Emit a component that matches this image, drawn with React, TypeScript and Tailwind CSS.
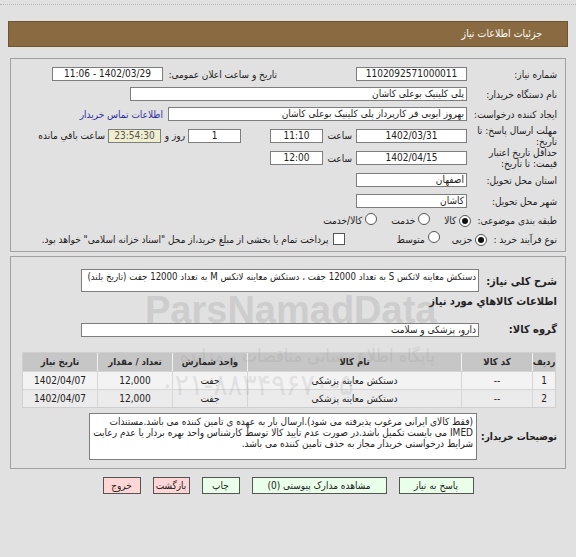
import React from 'react'

function Box({ className, children }: { className: string; children?: React.ReactNode }) {
  return (
    <div className={`h-[14px] border border-[#7d7d7d] bg-white leading-[12px] whitespace-nowrap overflow-hidden ${className}`}>
      {children}
    </div>
  )
}

function Radio({ checked }: { checked?: boolean }) {
  return (
    <span className="inline-flex w-[12px] h-[12px] shrink-0 items-center justify-center rounded-full border border-[#555] bg-white">
      {checked && <span className="w-[6px] h-[6px] rounded-full bg-[#111]" />}
    </span>
  )
}

const rows = [
  { id: '1', code: '--', name: 'دستکش معاینه پزشکی', unit: 'جفت', qty: '12,000', date: '1402/04/07', bg: 'bg-[#f3f3f3]' },
  { id: '2', code: '--', name: 'دستکش معاینه پزشکی', unit: 'جفت', qty: '12,000', date: '1402/04/07', bg: 'bg-[#ebebeb]' },
]

export default function App() {
  return (
    <div
      dir="rtl"
      className="relative w-[576px] h-[557px] overflow-hidden bg-[#e1e1e1] text-[10px] text-[#222] font-['DejaVu_Sans_Condensed','DejaVu_Sans',sans-serif]"
    >
      <div className="h-[5px] border-b border-dotted border-[#b5b5b5]" />

      <div className="mx-[8px] mt-[16px] h-[26px] bg-[#8a6b41] border border-[#6e5430] flex items-center pr-[25px] text-white text-[10.5px]">
        جزئیات اطلاعات نیاز
      </div>

      {/* panel 1 */}
      <div className="mx-[10px] mt-[11px] border border-[#a0a0a0] pt-[5px] pb-[3px] pr-[8px]">
        <div className="flex items-center h-[20px]">
          <span className="w-[90px] shrink-0">شماره نیاز:</span>
          <Box className="w-[111px] text-center">1102092571000011</Box>
          <span className="w-[109px] mr-[79px] shrink-0 whitespace-nowrap">تاریخ و ساعت اعلان عمومی:</span>
          <Box className="w-[111px] mr-[5px] text-center">1402/03/29 - 11:06</Box>
        </div>
        <div className="flex items-center h-[20px]">
          <span className="w-[90px] shrink-0">نام دستگاه خریدار:</span>
          <Box className="w-[337px] pr-[2px]">پلی کلینیک بوعلی کاشان</Box>
        </div>
        <div className="flex items-center h-[20px]">
          <span className="w-[90px] shrink-0 whitespace-nowrap">ایجاد کننده درخواست:</span>
          <Box className="w-[299px] pr-[2px]">بهروز ایوبی فر کارپرداز پلی کلینیک بوعلی کاشان</Box>
          <span className="mr-[5px] text-[#2f2fa0] whitespace-nowrap">اطلاعات تماس خریدار</span>
        </div>
        <div className="flex items-center h-[23px]">
          <span className="w-[90px] shrink-0 leading-[11px]">مهلت ارسال پاسخ: تا تاریخ:</span>
          <Box className="w-[111px] text-center">1402/03/31</Box>
          <span className="w-[26px] mr-[4px] shrink-0">ساعت</span>
          <Box className="w-[53px] mr-[3px] text-center">11:10</Box>
          <Box className="w-[53px] mr-[29px] text-center">1</Box>
          <span className="w-[18px] mr-[3px] shrink-0 whitespace-nowrap">روز و</span>
          <Box className="w-[53px] mr-[6px] text-center !bg-[#efefcf] text-[#555]">23:54:30</Box>
          <span className="mr-[3px] whitespace-nowrap">ساعت باقي مانده</span>
        </div>
        <div className="flex items-center h-[22px]">
          <span className="w-[90px] shrink-0 leading-[11px]">حداقل تاریخ اعتبار قیمت: تا تاریخ:</span>
          <Box className="w-[111px] text-center">1402/04/15</Box>
          <span className="w-[26px] mr-[4px] shrink-0">ساعت</span>
          <Box className="w-[53px] mr-[3px] text-center">12:00</Box>
        </div>
        <div className="flex items-center h-[22px]">
          <span className="w-[90px] shrink-0">استان محل تحویل:</span>
          <Box className="w-[111px] pr-[2px]">اصفهان</Box>
        </div>
        <div className="flex items-center h-[20px]">
          <span className="w-[90px] shrink-0">شهر محل تحویل:</span>
          <Box className="w-[111px] pr-[2px]">کاشان</Box>
        </div>
        <div className="flex items-center h-[19px] whitespace-nowrap">
          <span>طبقه بندی موضوعی:</span>
          <span className="mr-[6px]"><Radio checked /></span>
          <span className="mr-[3px]">کالا</span>
          <span className="mr-[14px]"><Radio /></span>
          <span className="mr-[3px]">خدمت</span>
          <span className="mr-[14px]"><Radio /></span>
          <span className="mr-[3px]">کالا/خدمت</span>
        </div>
        <div className="flex items-center h-[18px] whitespace-nowrap">
          <span>نوع فرآیند خرید :</span>
          <span className="mr-[6px]"><Radio checked /></span>
          <span className="mr-[3px]">جزیی</span>
          <span className="mr-[12px]"><Radio /></span>
          <span className="mr-[3px]">متوسط</span>
          <span className="mr-[52px] w-[12px] h-[12px] border border-[#555] bg-white shrink-0" />
          <span className="mr-[4px]">پرداخت تمام یا بخشی از مبلغ خرید،از محل "اسناد خزانه اسلامی" خواهد بود.</span>
        </div>
      </div>

      {/* panel 2 */}
      <div className="mx-[10px] mt-[4px] border border-[#a0a0a0] pt-[12px] pb-[8px] pr-[8px] pl-[8px]">
        <div className="flex items-start h-[23px]">
          <span className="w-[78px] shrink-0 font-bold text-[11px] mt-[5px] whitespace-nowrap">شرح کلی نیاز:</span>
          <div className="w-[398px] h-[23px] border border-[#7d7d7d] bg-white pr-[2px] leading-[14px] text-[9.6px] whitespace-nowrap overflow-hidden">
            دستکش معاینه لاتکس S به تعداد 12000 جفت ، دستکش معاینه لاتکس M به تعداد 12000 جفت (تاریخ بلند)
          </div>
        </div>
        <div className="h-[20px] flex items-center font-bold text-[11px]">اطلاعات کالاهاي مورد نیاز</div>
        <div className="flex items-center h-[16px] mt-[10px]">
          <span className="w-[78px] shrink-0 font-bold text-[11px]">گروه کالا:</span>
          <Box className="w-[398px] h-[12px] leading-[10px] pr-[2px]">دارو، پزشکی و سلامت</Box>
        </div>

        <div className="mt-[14px] mr-[1px] w-[534px] border border-[#cfcfcf] bg-[#f3f3f3]">
          <div className="flex h-[18px] bg-[#c6c6c6] font-bold text-[9.5px] text-[#2a2a2a]">
            <div className="w-[23px] flex items-center justify-center border-l border-[#f0f0f0]">ردیف</div>
            <div className="w-[71px] flex items-center justify-center border-l border-[#f0f0f0]">کد کالا</div>
            <div className="w-[214px] flex items-center justify-center border-l border-[#f0f0f0]">نام کالا</div>
            <div className="w-[75px] flex items-center justify-center border-l border-[#f0f0f0]">واحد شمارش</div>
            <div className="w-[75px] flex items-center justify-center border-l border-[#f0f0f0]">تعداد / مقدار</div>
            <div className="flex-1 flex items-center justify-center">تاریخ نیاز</div>
          </div>
          {rows.map((r) => (
            <div key={r.id} className={`flex h-[18px] border-t border-[#d6d6d6] ${r.bg}`}>
              <div className="w-[23px] flex items-center justify-center border-l border-[#d6d6d6]">{r.id}</div>
              <div className="w-[71px] flex items-center justify-center border-l border-[#d6d6d6]">{r.code}</div>
              <div className="w-[214px] flex items-center justify-center border-l border-[#d6d6d6]">{r.name}</div>
              <div className="w-[75px] flex items-center justify-center border-l border-[#d6d6d6]">{r.unit}</div>
              <div className="w-[75px] flex items-center justify-center border-l border-[#d6d6d6]">{r.qty}</div>
              <div className="flex-1 flex items-center justify-center">{r.date}</div>
            </div>
          ))}
        </div>

        <div className="flex items-center mt-[5px]">
          <span className="w-[80px] shrink-0 font-bold text-[10px] whitespace-nowrap">توضیحات خریدار:</span>
          <div className="w-[388px] h-[47px] border border-[#7d7d7d] bg-white pr-[3px] pt-[2px] leading-[11px]">
            (فقط کالای ایرانی مرغوب پذیرفته می شود).ارسال بار به عهده ی تامین کننده می باشد.مستندات IMED می بایست تکمیل باشد.در صورت عدم تایید کالا توسط کارشناس واحد بهره بردار یا عدم رعایت شرایط درخواستی خریدار مجاز به حذف تامین کننده می باشد.
          </div>
        </div>
      </div>

      {/* buttons */}
      <div className="flex justify-center gap-[12px] mt-[8px]">
        <button className="w-[75px] h-[17px] border border-[#555] bg-[#eaffea] text-[10px] leading-[14px]">پاسخ به نیاز</button>
        <button className="w-[135px] h-[17px] border border-[#555] bg-[#eaffea] text-[10px] leading-[14px]">مشاهده مدارک پیوستی (0)</button>
        <button className="w-[38px] h-[17px] border border-[#555] bg-[#eaffea] text-[10px] leading-[14px]">چاپ</button>
        <button className="w-[37px] h-[17px] border border-[#555] bg-[#ffd6d6] text-[10px] leading-[14px]">بازگشت</button>
        <button className="w-[38px] h-[17px] border border-[#555] bg-[#ffd6d6] text-[10px] leading-[14px]">خروج</button>
      </div>

      {/* watermark */}
      <div className="absolute left-[145px] top-[282px] text-[38px] font-bold text-[#7f7f7f] opacity-20 font-['Liberation_Sans',sans-serif] pointer-events-none" dir="ltr">
        ParsNamadData
      </div>
      <div className="absolute left-[180px] top-[342px] text-[18px] text-[#7f7f7f] opacity-15 pointer-events-none whitespace-nowrap">
        پایگاه اطلاع رسانی مناقصات و مزایده
      </div>
      <div className="absolute left-[160px] top-[362px] text-[30px] text-[#7f7f7f] opacity-15 pointer-events-none whitespace-nowrap" dir="ltr">
        ۰۲۱-۸۸۳۴۹۶۷۰-۵
      </div>
    </div>
  )
}
